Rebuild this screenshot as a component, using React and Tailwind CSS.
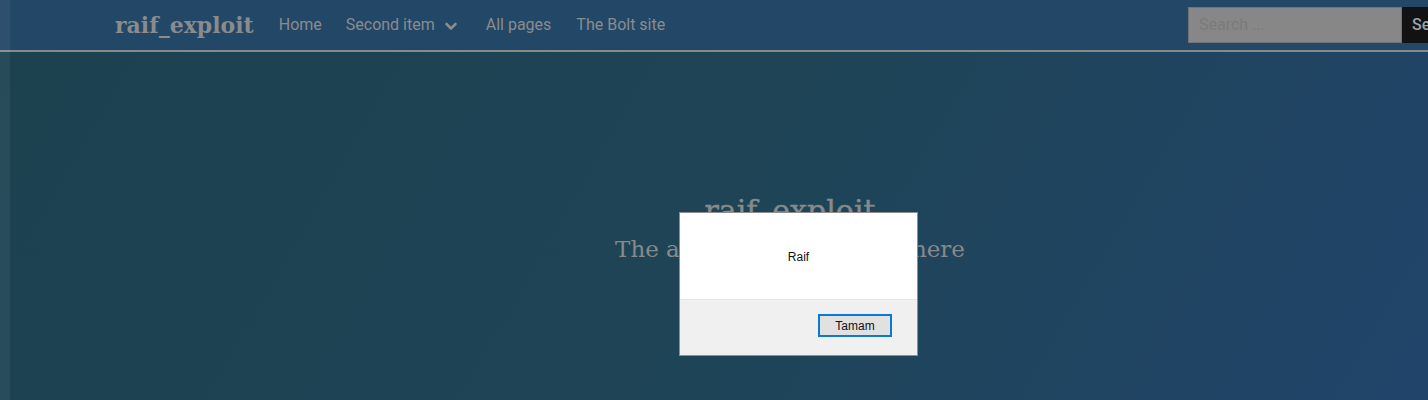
import React from "react";

export default function App() {
  return (
    <div className="relative w-[1428px] h-[400px] overflow-hidden bg-[linear-gradient(120deg,#1c4250_0%,#1e4456_50%,#21446a_100%)] font-['Roboto',sans-serif]">
      {/* header */}
      <header className="h-[52px] bg-[#234766] border-b-2 border-[#878a8c] flex items-center">
        <div className="flex items-center w-[1478px] shrink-0 pl-[115px]">
          <span className="font-['DejaVu_Serif',serif] font-bold text-[22px] text-[#898b8c]">raif_exploit</span>
          <nav className="flex items-center ml-[25px] text-[16px] text-[#8a8c8e]">
            <span>Home</span>
            <span className="ml-[24px] flex items-center">
              Second item
              <svg className="ml-[9px] mt-[1px]" width="14" height="14" viewBox="0 0 14 14" fill="none" stroke="#8a8c8e" strokeWidth="2.6" strokeLinecap="round" strokeLinejoin="round"><path d="M2.5 5l4.5 4.5 4.5-4.5" /></svg>
            </span>
            <span className="ml-[28px]">All pages</span>
            <span className="ml-[25px]">The Bolt site</span>
          </nav>
          <div className="ml-auto flex items-center">
            <div className="w-[214px] h-[36px] bg-[#878787] border border-[#6f7478] flex items-center pl-[10px] text-[16px] text-[#7b7b7b]">Search ...</div>
            <div className="w-[76px] h-[36px] bg-[#121212] flex items-center pl-[10px] text-[16px] font-medium text-[#9aa3ad]">Search</div>
          </div>
        </div>
      </header>

      {/* hero */}
      <main className="flex flex-col items-center pt-[140px] pl-[152px] text-[#878a8c] font-['DejaVu_Serif',serif]">
        <div className="text-[30px] leading-[38px] [-webkit-text-stroke:0.4px_#878a8c]">raif_exploit</div>
        <div className="text-[23px] leading-[30px] mt-[4px]">The amazing payoff goes here</div>
      </main>

      {/* left edge strip */}
      <div className="absolute left-0 top-0 w-[10px] h-full bg-white/[0.05]" />

      {/* alert dialog */}
      <div className="absolute left-[679px] top-[212px] w-[239px] h-[144px] border border-[#8e8e8e] bg-white flex flex-col font-['Liberation_Sans',sans-serif]">
        <div className="h-[86px] flex items-center justify-center text-[12px] text-[#111] pt-[1px]">Raif</div>
        <div className="flex-1 bg-[#f0f0f0] border-t border-[#e6e6e6] flex items-start justify-end pr-[25px] pt-[14px]">
          <div className="w-[74px] h-[23px] border-2 border-[#0a79d6] bg-[#e1e1e1] flex items-center justify-center text-[12px] text-[#111]">Tamam</div>
        </div>
      </div>
    </div>
  );
}
